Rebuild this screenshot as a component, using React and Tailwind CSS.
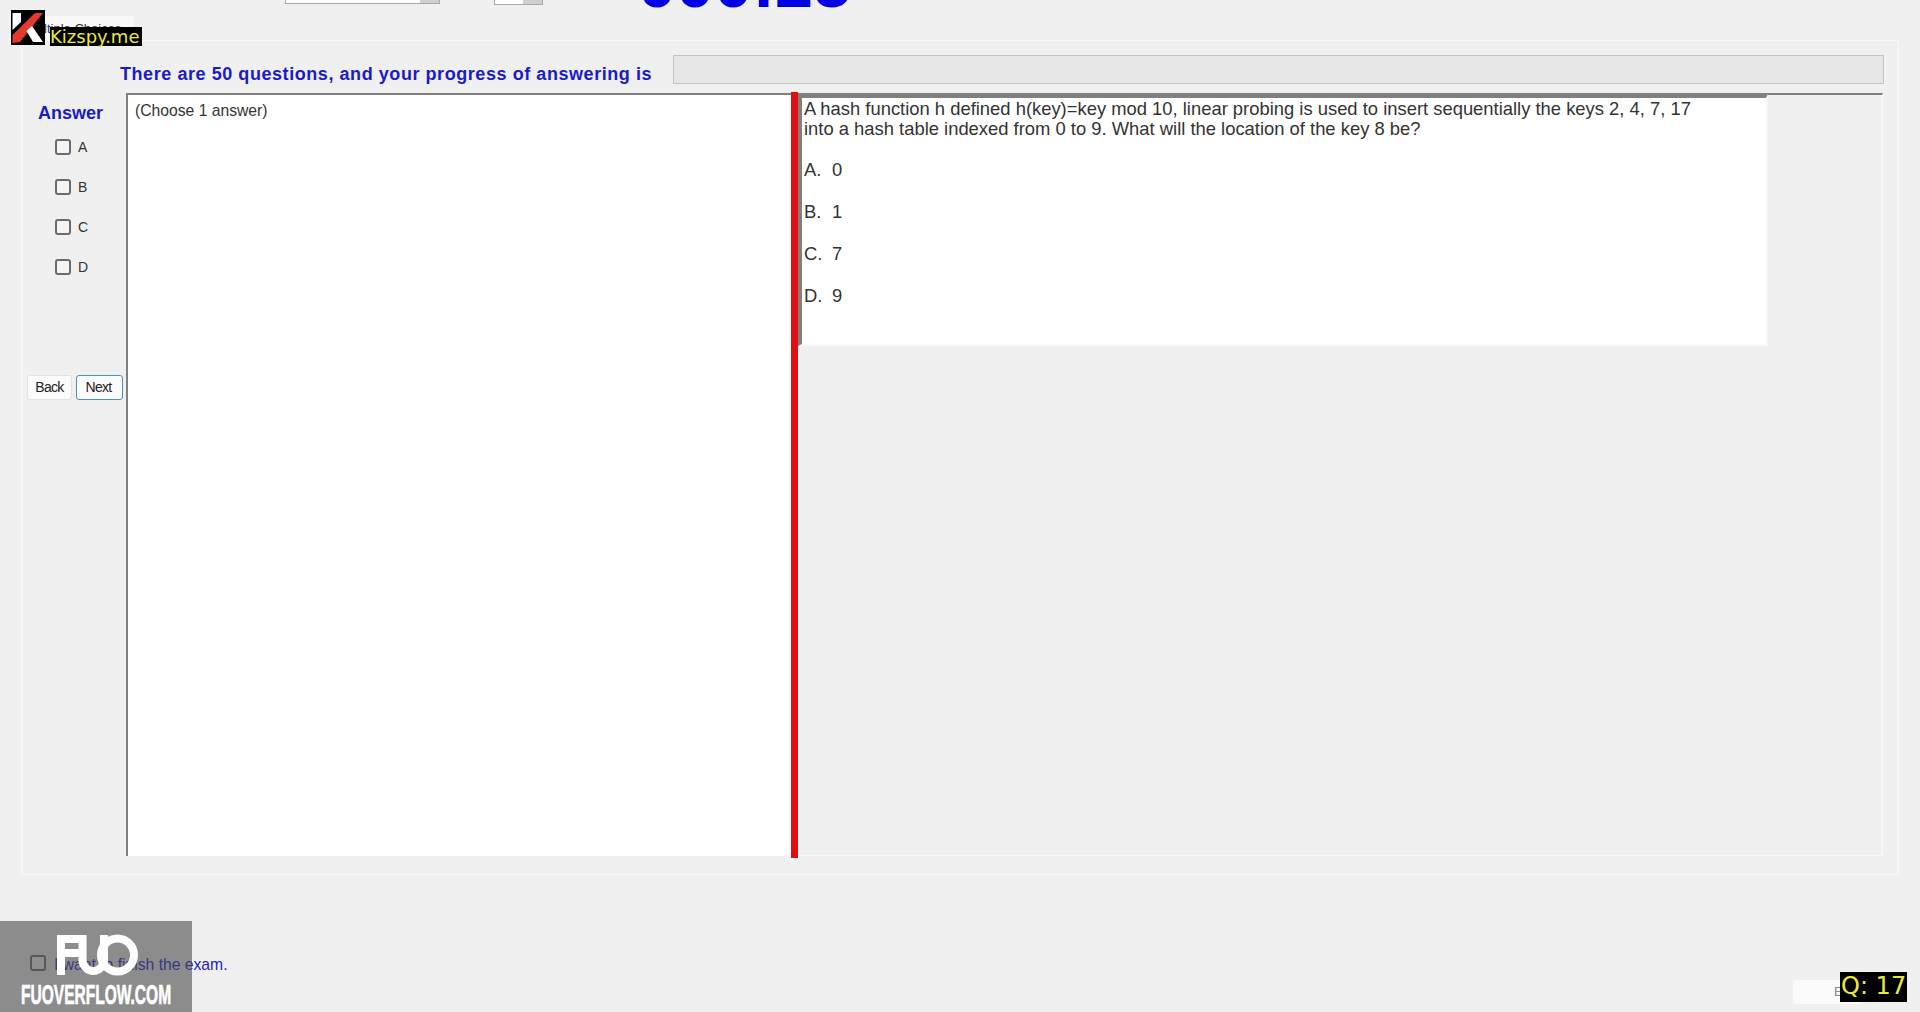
import React from 'react';

const options = ['A', 'B', 'C', 'D'];
const choices = [['A.', '0'], ['B.', '1'], ['C.', '7'], ['D.', '9']];

const sans = 'font-["Liberation_Sans",Arial,sans-serif]';

const Box = ({ className = '' }) => (
  <span className={`block w-[16px] h-[16px] rounded-[3px] border-2 border-[#6b6b6b] bg-[#f4f4f4] ${className}`} />
);

const KLogo = () => (
  <svg className="absolute left-[11px] top-[10px]" width="34" height="35" viewBox="0 0 34 35">
    <rect width="34" height="35" fill="#000" />
    <path d="M1.5 3H10V12L1.5 20z" fill="#fff" />
    <path d="M1.5 33V25L24 3h8L9 32z" fill="#e23a2c" />
    <path d="M15.5 21L21 16 32 32H22z" fill="#fff" />
  </svg>
);

const FuoLogo = () => (
  <svg className="absolute left-[57px] top-[13px]" width="82" height="42" viewBox="0 0 82 42" fill="none" stroke="#fff" strokeWidth="8">
    <path d="M4 41V5h22M4 19h21" />
    <path d="M25.5 1V26a10.75 11 0 0 0 21.5 0V1" />
    <circle cx="60.5" cy="21" r="16.5" />
  </svg>
);

export default function App() {
  return (
    <div className={`relative w-[1920px] h-[1012px] overflow-hidden bg-[#f0f0f0] ${sans}`}>
      {/* top strip, cut off by the recording */}
      <div className="relative h-[40px] overflow-hidden">
        <div className="flex items-start">
          <div className="ml-[285px] w-[155px] h-[4px] bg-white border-b border-x border-[#a8a8a8] flex justify-end">
            <span className="w-[19px] bg-[#cfcfcf]" />
          </div>
          <div className="ml-[54px] w-[49px] h-[5px] bg-white border-b border-x border-[#a8a8a8] flex justify-end">
            <span className="w-[19px] bg-[#cfcfcf]" />
          </div>
          <div className="ml-[95px] -mt-[50px] text-[68.5px] leading-none font-bold text-[#0000e6]">000:25</div>
        </div>
        <div className="absolute left-[22px] top-[16px] w-[112px] h-[24px] rounded-t-[3px] bg-[#f8f8f8] pl-[4px] pt-[3px] text-[13px] text-[#333]">
          Multiple Choices
        </div>
      </div>

      {/* main group box */}
      <div className="ml-[21px] w-[1878px] h-[835px] border border-[#f9f9f9] pt-[14px]">
        <div className="flex items-start h-[30px]">
          <div className="ml-[98px] w-[553px] pt-[9px] text-[18px] leading-[20px] tracking-[0.56px] font-bold text-[#1a1acd] whitespace-nowrap">
            There are 50 questions, and your progress of answering is
          </div>
          <div className="w-[1211px] h-[29px] bg-[#e6e6e6] border border-[#c4c4c4]" />
        </div>

        <div className="flex mt-[8px] h-[765px] w-[1861px] items-start">
          <div className="w-[104px] flex flex-col">
            <div className="ml-[16px] mt-[10px] text-[18px] leading-[20px] font-bold text-[#1a1acd]">Answer</div>
            <div className="ml-[33px] mt-[16px] flex flex-col gap-[24px]">
              {options.map((o) => (
                <div key={o} className="flex items-start h-[16px]">
                  <Box />
                  <span className="ml-[7px] text-[14px] leading-[16px] text-[#333]">{o}</span>
                </div>
              ))}
            </div>
            <div className="ml-[5px] mt-[100px] flex gap-[4px] text-[14px] tracking-[-0.7px] text-[#222]">
              <button className="w-[45px] h-[25px] rounded-[3px] bg-[#fbfbfb] border border-[#e2e2e2]">Back</button>
              <button className="w-[47px] h-[25px] rounded-[3px] bg-[#fbfbfb] border border-[#4d8fc0] pr-[2px]">Next</button>
            </div>
          </div>

          <div className="w-[665px] h-[763px] bg-white border-l-2 border-t-2 border-[#808080] pl-[7px] pt-[6px] text-[15.7px] leading-[20px] text-[#333]">
            (Choose 1 answer)
          </div>

          <div className="w-[7px] h-[766px] -mt-[1px] bg-[#e01010]" />

          <div className="flex-1 h-[763px] border-t-2 border-[#808080] border-r border-r-[#fafafa] border-b border-b-[#fafafa]">
            <div className="w-[970px] h-[252px] bg-white border-t-[4px] border-l-[4px] border-t-[#808080] border-l-[#808080] border-r-2 border-r-[#f8f8f8] border-b-2 border-b-[#f8f8f8] -mt-[1px] pl-[2px] text-[18.4px] text-[#333]">
              <p className="leading-[20px] pt-[1px]">
                A hash function h defined h(key)=key mod 10, linear probing is used to insert sequentially the keys 2, 4, 7, 17
              </p>
              <p className="leading-[20px]">into a hash table indexed from 0 to 9. What will the location of the key 8 be?</p>
              <div className="mt-[21px] flex flex-col gap-[22px]">
                {choices.map(([l, v]) => (
                  <div key={l} className="flex leading-[20px]">
                    <span className="w-[28px]">{l}</span>
                    <span>{v}</span>
                  </div>
                ))}
              </div>
            </div>
          </div>
        </div>
      </div>

      {/* footer */}
      <div className="flex items-start mt-[80px] ml-[30px]">
        <Box />
        <span className="ml-[8px] w-[175px] text-[15.7px] leading-[20px] text-[#1a1acd] whitespace-nowrap">I want to finish the exam.</span>
        <button className="ml-[1564px] mt-[25px] w-[70px] h-[24px] rounded-[4px] bg-[#fafafa] text-left pl-[41px] text-[13px] text-[#888]">E</button>
      </div>

      {/* watermarks on top of the recording */}
      <KLogo />
      <div className="absolute left-[50px] top-[27px] w-[92px] h-[19px] bg-black text-[#eaea3c] text-[18px] leading-[20px] whitespace-nowrap font-['DejaVu_Sans',sans-serif]">
        Kizspy.me
      </div>
      <div className="absolute left-0 top-[921px] w-[192px] h-[91px] bg-[rgba(73,73,73,0.6)]">
        <FuoLogo />
        <div className="absolute left-[21px] top-[61px] text-[27px] leading-[26px] font-bold text-white whitespace-nowrap origin-left scale-x-[0.575] [-webkit-text-stroke:0.7px_white]">
          FUOVERFLOW.COM
        </div>
      </div>
      <div className="absolute left-[1840px] top-[972px] w-[67px] h-[30px] pl-[1px] bg-black text-[#eaea3c] text-[24px] leading-[28px] whitespace-nowrap font-['DejaVu_Sans',sans-serif]">
        Q: 17
      </div>
    </div>
  );
}
